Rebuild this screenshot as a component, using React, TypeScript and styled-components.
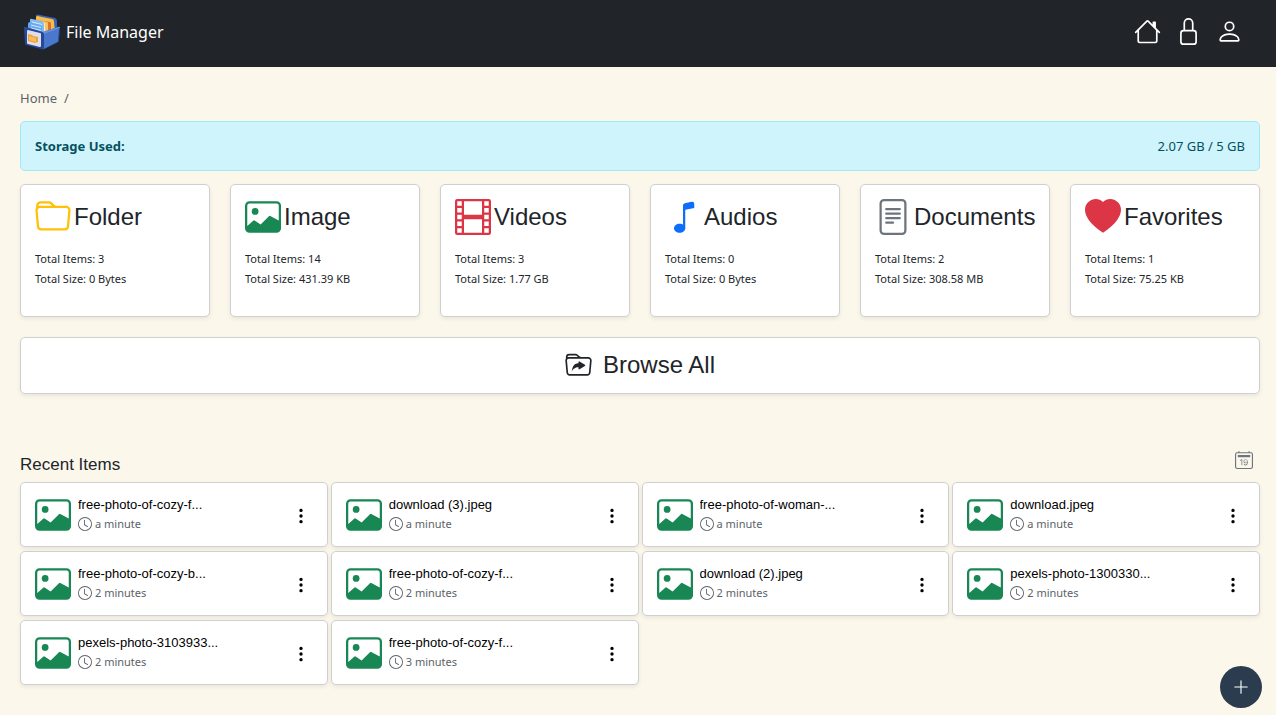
import React from "react";
import styled, { createGlobalStyle } from "styled-components";
import {
  BsCalendar2Date,
  BsClock,
  BsFileText,
  BsFilm,
  BsFolder,
  BsFolderSymlink,
  BsHeartFill,
  BsHouse,
  BsImage,
  BsLock,
  BsMusicNote,
  BsPerson,
  BsPlusLg,
  BsThreeDotsVertical,
} from "react-icons/bs";
import type { IconType } from "react-icons";

const ui = `"Noto Sans", sans-serif`;
const heading = `"Liberation Sans", Arial, sans-serif`;

const GlobalStyle = createGlobalStyle`
  *, *::before, *::after { box-sizing: border-box; }
  html { background: #fcf7eb; }
  body {
    margin: 0;
    min-height: 100vh;
    background: #fcf7eb;
    color: #212529;
    font-family: ${ui};
    font-size: 12px;
    line-height: 20px;
  }
  h1, h2, h3, p, ul, ol { margin: 0; padding: 0; font-weight: 400; }
  ul, ol { list-style: none; }
  button { font: inherit; color: inherit; cursor: pointer; }
  svg { display: block; flex-shrink: 0; }
`;

const Header = styled.header`
  display: flex;
  align-items: center;
  justify-content: space-between;
  height: 67px;
  padding: 0 33px 4px 24px;
  background: #212529;
  color: #fff;
`;

const Brand = styled.a`
  display: flex;
  align-items: center;
  gap: 6px;
  color: #fff;
  font-size: 16px;
  line-height: 24px;
  text-decoration: none;
`;

const HeaderNav = styled.nav`
  display: flex;
  gap: 14px;
`;

const HeaderLink = styled.a`
  display: flex;
  color: #fff;
`;

const Main = styled.main`
  padding: 21px 16px 24px 20px;
`;

const Breadcrumb = styled.ol`
  display: flex;
  gap: 7px;
  margin-bottom: 13px;
  font-size: 13px;
  color: #5c6268;
`;

const CrumbLink = styled.a`
  color: inherit;
  text-decoration: none;
`;

const Storage = styled.div`
  display: flex;
  align-items: center;
  justify-content: space-between;
  height: 50px;
  margin-bottom: 13px;
  padding: 0 14px;
  border: 1px solid #9eeaf9;
  border-radius: 5px;
  background: #cff4fc;
  color: #055160;
  font-size: 13px;
`;

const panel = `
  border: 1px solid #d0d0d2;
  border-radius: 5px;
  background: #fff;
  box-shadow: 0 2px 4px rgba(0, 0, 0, 0.075);
`;

const CategoryGrid = styled.ul`
  display: grid;
  grid-template-columns: repeat(6, minmax(0, 1fr));
  gap: 20px;
  margin-bottom: 20px;
`;

const CategoryCard = styled.li`
  ${panel}
  height: 133px;
  padding: 14px;
`;

const CategoryTitle = styled.h2<{ $tint: string }>`
  display: flex;
  align-items: center;
  gap: 3px;
  height: 36px;
  margin-bottom: 14px;
  font-family: ${heading};
  font-size: 24px;
  line-height: 30px;
  svg { color: ${(p) => p.$tint}; }
`;

const Stat = styled.p`
  font-size: 11px;
  white-space: nowrap;
`;

const BrowseButton = styled.button`
  ${panel}
  display: flex;
  align-items: center;
  justify-content: center;
  gap: 11px;
  width: 100%;
  height: 57px;
  margin-bottom: 57px;
  padding: 0 0 1px;
  font-family: ${heading};
  font-size: 24px;
`;

const RecentHeader = styled.div`
  display: flex;
  align-items: center;
  justify-content: space-between;
  height: 28px;
  margin-bottom: 3px;
  padding-right: 7px;
`;

const RecentTitle = styled.h2`
  font-family: ${heading};
  font-size: 17px;
  line-height: 28px;
`;

const CalendarButton = styled.button`
  align-self: flex-start;
  padding: 0;
  border: 0;
  background: none;
  color: #6c757d;
`;

const RecentGrid = styled.ul`
  display: grid;
  grid-template-columns: repeat(4, minmax(0, 1fr));
  gap: 4px 3px;
`;

const RecentCard = styled.li`
  ${panel}
  display: flex;
  align-items: center;
  height: 65px;
  padding: 0 17px 0 14px;
  color: #198754;
`;

const FileInfo = styled.div`
  flex: 1;
  min-width: 0;
  padding-left: 7px;
`;

const FileName = styled.h3`
  overflow: hidden;
  color: #000;
  font-family: ${heading};
  font-size: 13px;
  line-height: 19px;
  text-overflow: ellipsis;
  white-space: nowrap;
`;

const FileTime = styled.p`
  display: flex;
  align-items: center;
  gap: 3px;
  color: #5c6268;
  font-size: 11px;
`;

const MenuButton = styled.button`
  padding: 2px 0 0;
  border: 0;
  background: none;
  color: #000;
`;

const AddButton = styled.button`
  position: fixed;
  right: 14px;
  bottom: 7px;
  display: flex;
  align-items: center;
  justify-content: center;
  width: 42px;
  height: 42px;
  padding: 0;
  border: 0;
  border-radius: 50%;
  background: #2a3c4e;
  color: #fff;
`;

const Logo = () => (
  <svg width="36" height="36" viewBox="0 0 36 36" aria-hidden="true">
    <path d="M12 1q2-1 4 0l15 3q2 1 2 3v8l-21 4z" fill="#3763b4" />
    <path d="M14 2l16 4 1 13-17 3z" fill="#1c3c80" />
    <path d="M12 3q0-1 2-1l4 1 10 2q2 0 2 2l1 10-19 5z" fill="#f7bd4a" />
    <path d="M12 6l14 2q1 0 1 2v10l-12 3z" fill="#d9732a" />
    <path d="M12 6l11 2q1 0 1 2v11l-9 2z" fill="#f9c362" />
    <path d="M10 6l9 2q2 0 2 2v12l-9 1z" fill="#f1edf0" />
    <path d="M6 6q0-2 2-1l10 2q2 1 2 3v10l-14-2z" fill="#85b9ef" />
    <path d="M4 10q0-2 2-2l11 3q1 0 1 2v9L4 20z" fill="#67a9ee" />
    <path d="M8 8l10 2.500M7 11l10 2.500M7 14l10 2.500" stroke="#d5eaff" strokeWidth="1" />
    <path d="M0 14q0-2 2-1l17 5 15-5q2-1 2 1l-1 13q0 1-2 2l-13 6q-1 1-3 0L2 31q-1 0-1-2z" fill="#24499b" />
    <path d="M20 19l14-5q1 0 1 1l-1 12q0 1-1 1l-13 7z" fill="#4a78cc" />
    <path d="M19 18l15-5q2-1 2 1l-16 6z" fill="#6690de" />
    <path d="M3 17q0-1 1-1l12 3q1 0 1 1v12q0 1-1 1L4 30q-1 0-1-1z" fill="#e0deea" />
    <path d="M4 20l4 1 1 1 5 1v5l-3 1-7-2z" fill="#eaa23c" />
    <path d="M5 22l7 2v4l-7-2z" fill="#f7bc5a" />
  </svg>
);

interface Category {
  name: string;
  icon: IconType;
  tint: string;
  items: number;
  size: string;
}

const categories: Category[] = [
  { name: "Folder", icon: BsFolder, tint: "#ffc107", items: 3, size: "0 Bytes" },
  { name: "Image", icon: BsImage, tint: "#198754", items: 14, size: "431.39 KB" },
  { name: "Videos", icon: BsFilm, tint: "#dc3545", items: 3, size: "1.77 GB" },
  { name: "Audios", icon: BsMusicNote, tint: "#0d6efd", items: 0, size: "0 Bytes" },
  { name: "Documents", icon: BsFileText, tint: "#6c757d", items: 2, size: "308.58 MB" },
  { name: "Favorites", icon: BsHeartFill, tint: "#dc3545", items: 1, size: "75.25 KB" },
];

const recent = [
  { name: "free-photo-of-cozy-f...", time: "a minute" },
  { name: "download (3).jpeg", time: "a minute" },
  { name: "free-photo-of-woman-...", time: "a minute" },
  { name: "download.jpeg", time: "a minute" },
  { name: "free-photo-of-cozy-b...", time: "2 minutes" },
  { name: "free-photo-of-cozy-f...", time: "2 minutes" },
  { name: "download (2).jpeg", time: "2 minutes" },
  { name: "pexels-photo-1300330...", time: "2 minutes" },
  { name: "pexels-photo-3103933...", time: "2 minutes" },
  { name: "free-photo-of-cozy-f...", time: "3 minutes" },
];

export default function App() {
  return (
    <>
      <GlobalStyle />
      <Header>
        <Brand href="#">
          <Logo />
          File Manager
        </Brand>
        <HeaderNav>
          <HeaderLink href="#" aria-label="Home"><BsHouse size={27} /></HeaderLink>
          <HeaderLink href="#" aria-label="Lock"><BsLock size={27} /></HeaderLink>
          <HeaderLink href="#" aria-label="Profile"><BsPerson size={27} /></HeaderLink>
        </HeaderNav>
      </Header>
      <Main>
        <Breadcrumb>
          <li><CrumbLink href="#">Home</CrumbLink></li>
          <li>/</li>
        </Breadcrumb>
        <Storage>
          <strong>Storage Used:</strong>
          <span>2.07 GB / 5 GB</span>
        </Storage>
        <CategoryGrid>
          {categories.map(({ name, icon: Icon, tint, items, size }) => (
            <CategoryCard key={name}>
              <CategoryTitle $tint={tint}>
                <Icon size={36} />
                {name}
              </CategoryTitle>
              <Stat>Total Items: {items}</Stat>
              <Stat>Total Size: {size}</Stat>
            </CategoryCard>
          ))}
        </CategoryGrid>
        <BrowseButton type="button">
          <BsFolderSymlink size={27} />
          Browse All
        </BrowseButton>
        <RecentHeader>
          <RecentTitle>Recent Items</RecentTitle>
          <CalendarButton type="button" aria-label="Filter by date">
            <BsCalendar2Date size={18} />
          </CalendarButton>
        </RecentHeader>
        <RecentGrid>
          {recent.map(({ name, time }, i) => (
            <RecentCard key={i}>
              <BsImage size={36} />
              <FileInfo>
                <FileName>{name}</FileName>
                <FileTime><BsClock size={14} />{time}</FileTime>
              </FileInfo>
              <MenuButton type="button" aria-label={`Options for ${name}`}>
                <BsThreeDotsVertical size={18} />
              </MenuButton>
            </RecentCard>
          ))}
        </RecentGrid>
      </Main>
      <AddButton type="button" aria-label="Add"><BsPlusLg size={18} /></AddButton>
    </>
  );
}
